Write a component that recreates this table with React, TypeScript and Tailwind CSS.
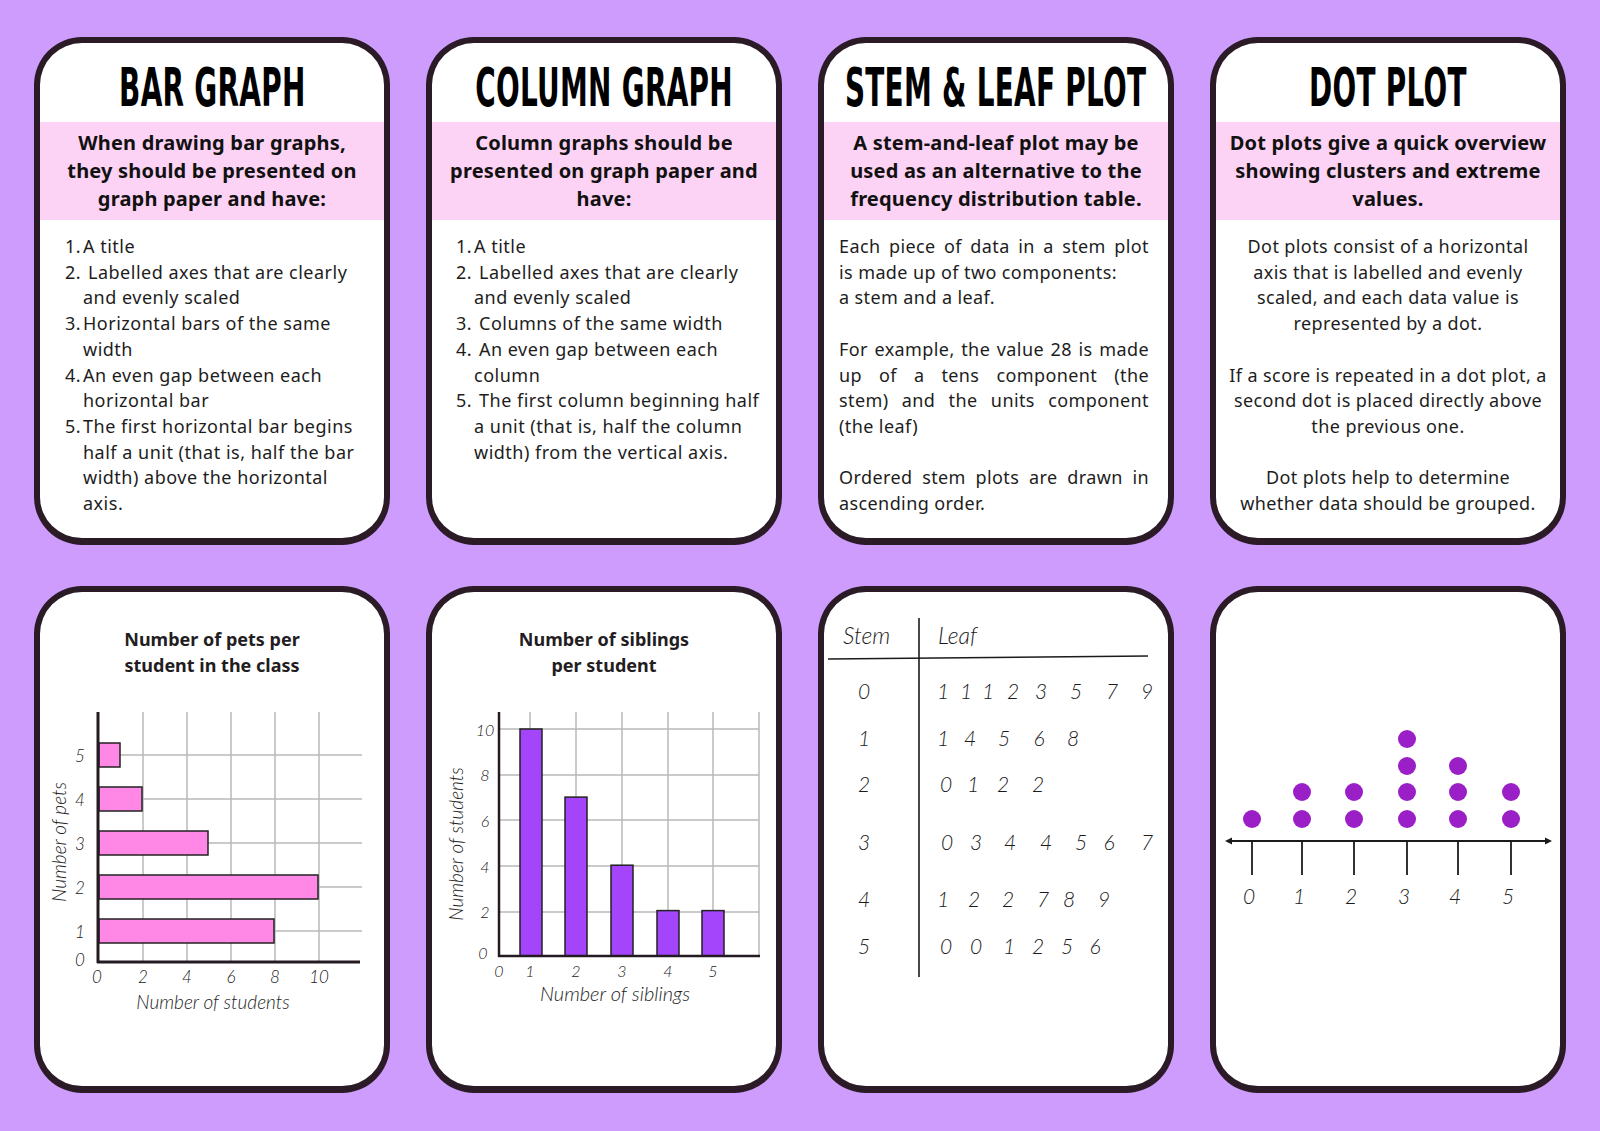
import React from 'react'

const hand = { fontFamily: 'Lato, "DejaVu Sans", sans-serif', fontStyle: 'italic', fontWeight: 300 } as const

function Card({ children }: { children: React.ReactNode }) {
  return (
    <div className="relative overflow-hidden rounded-[48px] border-[6px] border-b-[7px] border-[#2a1b26] bg-white">
      {children}
    </div>
  )
}

function Heading({ title, intro }: { title: string; intro: string[] }) {
  return (
    <>
      <div className="flex h-[79px] items-center justify-center whitespace-nowrap pt-[9px]">
        <h2 className="inline-block origin-center scale-x-[0.585] whitespace-nowrap font-['DejaVu_Sans_Condensed','DejaVu_Sans',sans-serif] text-[53px] font-bold leading-none tracking-[0.5px] text-black">
          {title}
        </h2>
      </div>
      <div className="flex h-[98px] flex-col justify-center bg-[#fdd3f5] text-center text-[20px] font-bold leading-[28px] tracking-[0.2px] text-[#111]">
        {intro.map((l) => (
          <div key={l} className="whitespace-nowrap">
            {l}
          </div>
        ))}
      </div>
    </>
  )
}

type Item = { n: string; lines: string[]; gap?: boolean }

function NumberedList({ items, pad }: { items: Item[]; pad: string }) {
  return (
    <div className={`pt-[14px] text-[18px] leading-[25.7px] tracking-[0.5px] text-[#1d1d1d] ${pad}`}>
      {items.map((it) => (
        <div key={it.n} className="flex">
          <span className="w-[18px] shrink-0">{it.n}</span>
          <div>
            {it.lines.map((l, i) => (
              <div key={l} className={`whitespace-nowrap ${i === 0 && it.gap ? 'pl-[5px]' : ''}`}>
                {l}
              </div>
            ))}
          </div>
        </div>
      ))}
    </div>
  )
}

function BarChart() {
  const bars = [
    { y: 931, v: 8 },
    { y: 887, v: 10 },
    { y: 843, v: 5 },
    { y: 799, v: 2 },
    { y: 755, v: 1 },
  ]
  return (
    <svg width="344" height="340" viewBox="40 680 344 340">
      {[143, 187, 231, 275, 319].map((x) => (
        <line key={x} x1={x} y1={712} x2={x} y2={962} stroke="#b9b9b9" strokeWidth="1.5" />
      ))}
      {[755, 799, 843, 887, 931].map((y) => (
        <line key={y} x1={98} y1={y} x2={362} y2={y} stroke="#b9b9b9" strokeWidth="1.5" />
      ))}
      {bars.map((b) => (
        <rect key={b.y} x={99} y={b.y - 12} width={b.v * 22 - 1} height={24} fill="#ff88e6" stroke="#222" strokeWidth="1.5" />
      ))}
      <line x1={98} y1={712} x2={98} y2={963} stroke="#231a22" strokeWidth="3" />
      <line x1={97} y1={962} x2={360} y2={962} stroke="#231a22" strokeWidth="3" />
      <g style={hand} fontSize="17" fill="#222" textAnchor="middle" dominantBaseline="central">
        {['1', '2', '3', '4', '5'].map((t, i) => (
          <text key={t} x={80} y={931 - i * 44}>
            {t}
          </text>
        ))}
        <text x={80} y={959}>0</text>
        {['0', '2', '4', '6', '8', '10'].map((t, i) => (
          <text key={t} x={i === 0 ? 97 : 99 + i * 44} y={976}>
            {t}
          </text>
        ))}
        <text x={213} y={1001} fontSize="19">
          Number of students
        </text>
        <text x={58} y={842} fontSize="19" transform="rotate(-90 58 842)">
          Number of pets
        </text>
      </g>
    </svg>
  )
}

function ColumnChart() {
  const base = 956
  const unit = 22.7
  const cols = [
    { x: 531, v: 10 },
    { x: 576, v: 7 },
    { x: 622, v: 4 },
    { x: 668, v: 2 },
    { x: 713, v: 2 },
  ]
  return (
    <svg width="344" height="340" viewBox="432 680 344 340">
      {[530, 576, 622, 668, 713, 759].map((x) => (
        <line key={x} x1={x} y1={712} x2={x} y2={base} stroke="#b9b9b9" strokeWidth="1.5" />
      ))}
      {[729, 775, 820, 866, 912].map((y) => (
        <line key={y} x1={499} y1={y} x2={759} y2={y} stroke="#b9b9b9" strokeWidth="1.5" />
      ))}
      {cols.map((c) => (
        <rect key={c.x} x={c.x - 11} y={base - c.v * unit} width={22} height={c.v * unit} fill="#a445fb" stroke="#222" strokeWidth="1.5" />
      ))}
      <line x1={499} y1={712} x2={499} y2={957} stroke="#231a22" strokeWidth="2.5" />
      <line x1={498} y1={base} x2={760} y2={base} stroke="#231a22" strokeWidth="2.5" />
      <g style={hand} fontSize="16" fill="#222" textAnchor="middle" dominantBaseline="central">
        {['10', '8', '6', '4', '2'].map((t, i) => (
          <text key={t} x={485} y={729 + i * 45.7}>
            {t}
          </text>
        ))}
        <text x={483} y={952}>0</text>
        {['0', '1', '2', '3', '4', '5'].map((t, i) => (
          <text key={t} x={[499, 530, 576, 622, 668, 713][i]} y={970}>
            {t}
          </text>
        ))}
        <text x={615} y={993} fontSize="20">
          Number of siblings
        </text>
        <text x={455} y={844} fontSize="19" transform="rotate(-90 455 844)">
          Number of students
        </text>
      </g>
    </svg>
  )
}

function StemLeaf() {
  const rows = [
    { y: 690, s: '0', leaves: [['1', 943], ['1', 966], ['1', 988], ['2', 1013], ['3', 1041], ['5', 1076], ['7', 1112], ['9', 1147]] },
    { y: 737, s: '1', leaves: [['1', 943], ['4', 970], ['5', 1004], ['6', 1039], ['8', 1073]] },
    { y: 783, s: '2', leaves: [['0', 946], ['1', 973], ['2', 1003], ['2', 1038]] },
    { y: 841, s: '3', leaves: [['0', 947], ['3', 976], ['4', 1010], ['4', 1046], ['5', 1081], ['6', 1109], ['7', 1147]] },
    { y: 898, s: '4', leaves: [['1', 943], ['2', 974], ['2', 1008], ['7', 1043], ['8', 1069], ['9', 1104]] },
    { y: 945, s: '5', leaves: [['0', 946], ['0', 976], ['1', 1009], ['2', 1038], ['5', 1067], ['6', 1095]] },
  ] as { y: number; s: string; leaves: [string, number][] }[]
  return (
    <svg width="344" height="494" viewBox="824 592 344 494">
      <line x1={919} y1={618} x2={919} y2={977} stroke="#1b1b1b" strokeWidth="1.6" />
      <line x1={828} y1={659} x2={1148} y2={656} stroke="#1b1b1b" strokeWidth="1.6" />
      <g style={hand} fill="#1b1b1b" dominantBaseline="central">
        <text x={843} y={635} fontSize="23">
          Stem
        </text>
        <text x={938} y={635} fontSize="23">
          Leaf
        </text>
        {rows.map((r) => (
          <g key={r.s} textAnchor="middle" fontSize="21">
            <text x={864} y={r.y}>
              {r.s}
            </text>
            {r.leaves.map(([d, x], i) => (
              <text key={i} x={x} y={r.y}>
                {d}
              </text>
            ))}
          </g>
        ))}
      </g>
    </svg>
  )
}

function DotPlot() {
  const xs = [1252, 1302, 1354, 1407, 1458, 1511]
  const counts = [1, 2, 2, 4, 3, 2]
  const ys = [819, 792, 766, 739]
  return (
    <svg width="344" height="494" viewBox="1216 592 344 494">
      {xs.map((x, i) =>
        ys.slice(0, counts[i]).map((y) => <circle key={`${x}-${y}`} cx={x} cy={y} r={9} fill="#9a1fc6" />),
      )}
      <line x1={1229} y1={841} x2={1548} y2={841} stroke="#1b1b1b" strokeWidth="1.8" />
      <polygon points="1225,841 1232,837.5 1232,844.5" fill="#1b1b1b" />
      <polygon points="1552,841 1545,837.5 1545,844.5" fill="#1b1b1b" />
      {xs.map((x) => (
        <line key={x} x1={x} y1={841} x2={x} y2={875} stroke="#1b1b1b" strokeWidth="1.8" />
      ))}
      <g style={hand} fontSize="21" fill="#1b1b1b" textAnchor="middle" dominantBaseline="central">
        {xs.map((x, i) => (
          <text key={x} x={x - 3} y={895}>
            {i}
          </text>
        ))}
      </g>
    </svg>
  )
}

function ChartTitle({ lines }: { lines: string[] }) {
  return (
    <div className="h-[88px] pt-[34px] text-center text-[18px] font-bold leading-[26px] text-[#231d22]">
      {lines.map((l) => (
        <div key={l}>{l}</div>
      ))}
    </div>
  )
}

export default function App() {
  return (
    <div className="h-[1131px] w-[1600px] overflow-hidden bg-[#ce9cfd] font-['Noto_Sans',sans-serif]">
      <div className="grid grid-cols-[repeat(4,356px)] grid-rows-[508px_507px] gap-x-[36px] gap-y-[41px] pl-[34px] pt-[37px]">
        {/* Bar graph */}
        <Card>
          <Heading title="BAR GRAPH" intro={['When drawing bar graphs,', 'they should be presented on', 'graph paper and have:']} />
          <NumberedList
            pad="pl-[25px]"
            items={[
              { n: '1.', lines: ['A title'] },
              { n: '2.', lines: ['Labelled axes that are clearly', 'and evenly scaled'], gap: true },
              { n: '3.', lines: ['Horizontal bars of the same', 'width'] },
              { n: '4.', lines: ['An even gap between each', 'horizontal bar'] },
              { n: '5.', lines: ['The first horizontal bar begins', 'half a unit (that is, half the bar', 'width) above the horizontal', 'axis.'] },
            ]}
          />
        </Card>

        {/* Column graph */}
        <Card>
          <Heading title="COLUMN GRAPH" intro={['Column graphs should be', 'presented on graph paper and', 'have:']} />
          <NumberedList
            pad="pl-[24px]"
            items={[
              { n: '1.', lines: ['A title'] },
              { n: '2.', lines: ['Labelled axes that are clearly', 'and evenly scaled'], gap: true },
              { n: '3.', lines: ['Columns of the same width'], gap: true },
              { n: '4.', lines: ['An even gap between each', 'column'], gap: true },
              { n: '5.', lines: ['The first column beginning half', 'a unit (that is, half the column', 'width) from the vertical axis.'], gap: true },
            ]}
          />
        </Card>

        {/* Stem & leaf */}
        <Card>
          <Heading
            title="STEM & LEAF PLOT"
            intro={['A stem-and-leaf plot may be', 'used as an alternative to the', 'frequency distribution table.']}
          />
          <div className="pl-[15px] pr-[19px] pt-[14px] text-[18px] leading-[25.7px] tracking-[0.4px] text-[#1d1d1d]">
            <div className="whitespace-nowrap text-justify [text-align-last:justify]">Each piece of data in a stem plot</div>
            <div className="whitespace-nowrap">is made up of two components:</div>
            <div className="whitespace-nowrap">a stem and a leaf.</div>
            <div className="h-[25.7px]" />
            <div className="whitespace-nowrap text-justify [text-align-last:justify]">For example, the value 28 is made</div>
            <div className="text-justify [text-align-last:justify]">up of a tens component (the</div>
            <div className="text-justify [text-align-last:justify]">stem) and the units component</div>
            <div>(the leaf)</div>
            <div className="h-[25.7px]" />
            <div className="text-justify [text-align-last:justify]">Ordered stem plots are drawn in</div>
            <div>ascending order.</div>
          </div>
        </Card>

        {/* Dot plot */}
        <Card>
          <Heading title="DOT PLOT" intro={['Dot plots give a quick overview', 'showing clusters and extreme', 'values.']} />
          <div className="pt-[14px] text-center text-[18px] leading-[25.7px] tracking-[0.4px] text-[#1d1d1d]">
            <div className="whitespace-nowrap">Dot plots consist of a horizontal</div>
            <div className="whitespace-nowrap">axis that is labelled and evenly</div>
            <div className="whitespace-nowrap">scaled, and each data value is</div>
            <div className="whitespace-nowrap">represented by a dot.</div>
            <div className="h-[25.7px]" />
            <div className="whitespace-nowrap">If a score is repeated in a dot plot, a</div>
            <div className="whitespace-nowrap">second dot is placed directly above</div>
            <div className="whitespace-nowrap">the previous one.</div>
            <div className="h-[25.7px]" />
            <div className="whitespace-nowrap">Dot plots help to determine</div>
            <div className="whitespace-nowrap">whether data should be grouped.</div>
          </div>
        </Card>

        <Card>
          <ChartTitle lines={['Number of pets per', 'student in the class']} />
          <BarChart />
        </Card>

        <Card>
          <ChartTitle lines={['Number of siblings', 'per student']} />
          <ColumnChart />
        </Card>

        <Card>
          <StemLeaf />
        </Card>

        <Card>
          <DotPlot />
        </Card>
      </div>
    </div>
  )
}
